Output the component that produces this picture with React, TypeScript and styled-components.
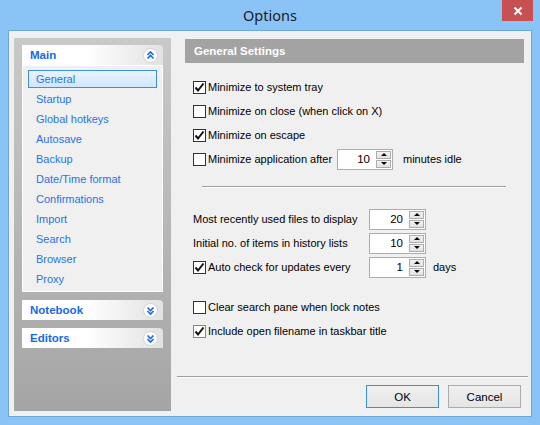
import React from 'react';
import styled, { createGlobalStyle } from 'styled-components';

const GlobalStyle = createGlobalStyle`
  html, body {
    margin: 0;
    padding: 0;
    background: #8ac4f7;
  }
  * {
    box-sizing: border-box;
  }
`;

//Window frame ----------------------------------
const Window = styled.div`
  width: 540px;
  height: 425px;
  display: flex;
  flex-direction: column;
  background-color: #8ac4f7;
  font-family: Tahoma, 'Liberation Sans', Arial, sans-serif;
  font-size: 11px;
  color: #000;
`;

const TitleBar = styled.div`
  height: 30px;
  display: grid;
  grid-template-columns: 1fr auto 1fr;
  align-items: start;
`;

const Title = styled.div`
  grid-column: 2;
  padding-top: 5px;
  font-family: 'Noto Sans', 'Open Sans', sans-serif;
  font-size: 14.5px;
  color: #1c1c1c;
`;

const CloseButton = styled.div`
  grid-column: 3;
  justify-self: end;
  width: 31px;
  height: 21px;
  margin-right: 7px;
  display: flex;
  justify-content: center;
  align-items: center;
  background-color: #c75050;
`;

const Client = styled.div`
  flex: 1;
  margin: 0 8px 8px 8px;
  display: flex;
  padding: 7px 3px 0 5px;
  background-color: #f0f0f0;
  border: 1px solid #6fa6da;
`;
//-----------------------------------------------

//Sidebar ---------------------------------------
const Sidebar = styled.div`
  width: 157px;
  margin-bottom: 5px;
  padding: 7px 8px 0 8px;
  display: flex;
  flex-direction: column;
  gap: 8px;
  background: linear-gradient(to bottom, #c9c9c9, #a5a5a5);
`;

const Section = styled.div`
  display: flex;
  flex-direction: column;
`;

const SectionHeader = styled.div`
  height: 20px;
  padding: 0 5px 0 8px;
  display: flex;
  justify-content: space-between;
  align-items: center;
  border-radius: 0 4px 0 0;
  background: linear-gradient(to right, #ffffff 0%, #ffffff 45%, #e2e2e2 100%);
  font-weight: bold;
  font-size: 11.5px;
  color: #1668e8;
`;

const ItemList = styled.div`
  padding: 4px 5px 1px 5px;
  display: flex;
  flex-direction: column;
  background-color: #f0f0f0;
  border: 1px solid #ffffff;
`;

const Item = styled.div<{ $selected?: boolean }>`
  height: 18px;
  margin-bottom: 2px;
  padding-left: 7px;
  display: flex;
  align-items: center;
  color: #2673ec;
  border: 1px solid ${p => (p.$selected ? '#3d8ee6' : 'transparent')};
  background: ${p => (p.$selected ? 'linear-gradient(to bottom, #eaf4ff, #cfe6fd)' : 'transparent')};
`;
//-----------------------------------------------

//Settings panel --------------------------------
const Panel = styled.div`
  flex: 1;
  display: flex;
  flex-direction: column;
`;

const PanelHeader = styled.div`
  height: 24px;
  margin: 1px 4px 0 14px;
  padding-left: 9px;
  display: flex;
  align-items: center;
  background-color: #a3a3a3;
  font-weight: bold;
  font-size: 11.5px;
  color: #ffffff;
`;

const Body = styled.div`
  flex: 1;
  padding: 14px 0 0 22px;
  display: flex;
  flex-direction: column;
`;

const Group = styled.div<{ $top: number }>`
  margin-top: ${p => p.$top}px;
  display: flex;
  flex-direction: column;
  gap: 4px;
`;

const Row = styled.div`
  height: 20px;
  display: flex;
  align-items: center;
`;

const Label = styled.span<{ $width?: number }>`
  width: ${p => (p.$width ? `${p.$width}px` : 'auto')};
  flex-shrink: 0;
  white-space: nowrap;
`;

const After = styled.span<{ $gap: number }>`
  margin-left: ${p => p.$gap}px;
`;

const Box = styled.span<{ $focus?: boolean }>`
  width: 13px;
  height: 13px;
  margin-right: 2px;
  flex-shrink: 0;
  display: flex;
  justify-content: center;
  align-items: center;
  background-color: #fff;
  border: 1px solid ${p => (p.$focus ? '#3399ff' : '#333333')};
`;

const Separator = styled.div`
  width: 304px;
  margin: 17px 0 0 9px;
  border-top: 1px solid #a0a0a0;
  border-bottom: 1px solid #ffffff;
`;

const Spin = styled.div<{ $width: number }>`
  width: ${p => p.$width}px;
  height: 21px;
  display: flex;
  background-color: #fff;
  border: 1px solid #abadb3;
`;

const SpinValue = styled.div`
  flex: 1;
  padding-right: 5px;
  display: flex;
  justify-content: flex-end;
  align-items: center;
  font-size: 11.5px;
`;

const SpinButtons = styled.div`
  width: 15px;
  margin: 1px;
  display: flex;
  flex-direction: column;
  gap: 1px;
`;

const SpinButton = styled.div`
  flex: 1;
  display: flex;
  justify-content: center;
  align-items: center;
  background: linear-gradient(to bottom, #f4f4f4, #e2e2e2);
  border: 1px solid #acacac;
`;

const Arrow = styled.span<{ $up?: boolean }>`
  width: 0;
  height: 0;
  border-left: 3px solid transparent;
  border-right: 3px solid transparent;
  ${p => (p.$up ? 'border-bottom: 3px solid #000;' : 'border-top: 3px solid #000;')}
`;

const Footer = styled.div`
  margin-left: 6px;
  border-top: 1px solid #a0a0a0;
`;

const Buttons = styled.div`
  padding: 7px 7px 8px 0;
  display: flex;
  justify-content: flex-end;
  gap: 9px;
  border-top: 1px solid #ffffff;
`;

const Button = styled.div<{ $default?: boolean }>`
  width: 73px;
  height: 23px;
  display: flex;
  justify-content: center;
  align-items: center;
  font-size: 11.5px;
  background: linear-gradient(to bottom, #f0f0f0, #e5e5e5);
  border: 1px solid ${p => (p.$default ? '#3c8fe0' : '#acacac')};
`;
//-----------------------------------------------

const Chevron = ({ up }: { up?: boolean }) => (
  <svg width="15" height="15" viewBox="0 0 15 15">
    <circle cx="7.5" cy="7.5" r="7" fill="#ffffff" stroke="#d2d2d2" />
    <g fill="none" stroke="#1668e8" strokeWidth="1.6" transform={up ? '' : 'rotate(180 7.5 7.5)'}>
      <polyline points="4.5,7 7.5,4 10.5,7" />
      <polyline points="4.5,10.5 7.5,7.5 10.5,10.5" />
    </g>
  </svg>
);

const Check = ({ checked, focus }: { checked?: boolean; focus?: boolean }) => (
  <Box $focus={focus}>
    {checked && (
      <svg width="11" height="11" viewBox="0 0 11 11">
        <polyline points="1.5,5.5 4,8.5 9.5,1.5" fill="none" stroke="#111" strokeWidth="2" />
      </svg>
    )}
  </Box>
);

const Spinner = ({ value, width }: { value: number; width: number }) => (
  <Spin $width={width}>
    <SpinValue>{value}</SpinValue>
    <SpinButtons>
      <SpinButton><Arrow $up /></SpinButton>
      <SpinButton><Arrow /></SpinButton>
    </SpinButtons>
  </Spin>
);

const items = [
  'General', 'Startup', 'Global hotkeys', 'Autosave', 'Backup', 'Date/Time format',
  'Confirmations', 'Import', 'Search', 'Browser', 'Proxy',
];

const App = (): JSX.Element => {
  return (
    <>
      <GlobalStyle />
      <Window>
        <TitleBar>
          <Title>Options</Title>
          <CloseButton>
            <svg width="10" height="10" viewBox="0 0 10 10">
              <path d="M1.5 1.5 L8.5 8.5 M8.5 1.5 L1.5 8.5" stroke="#fff" strokeWidth="2" />
            </svg>
          </CloseButton>
        </TitleBar>

        <Client>
          <Sidebar>
            <Section>
              <SectionHeader>Main<Chevron up /></SectionHeader>
              <ItemList>
                {items.map((item, i) => (
                  <Item key={item} $selected={i === 0}>{item}</Item>
                ))}
              </ItemList>
            </Section>
            <SectionHeader>Notebook<Chevron /></SectionHeader>
            <SectionHeader>Editors<Chevron /></SectionHeader>
          </Sidebar>

          <Panel>
            <PanelHeader>General Settings</PanelHeader>
            <Body>
              <Group $top={0}>
                <Row><Check checked /><Label>Minimize to system tray</Label></Row>
                <Row><Check /><Label>Minimize on close (when click on X)</Label></Row>
                <Row><Check checked /><Label>Minimize on escape</Label></Row>
                <Row>
                  <Check />
                  <Label $width={129}>Minimize application after</Label>
                  <Spinner value={10} width={56} />
                  <After $gap={10}>minutes idle</After>
                </Row>
              </Group>

              <Separator />

              <Group $top={21}>
                <Row>
                  <Label $width={176}>Most recently used files to display</Label>
                  <Spinner value={20} width={57} />
                </Row>
                <Row>
                  <Label $width={176}>Initial no. of items in history lists</Label>
                  <Spinner value={10} width={57} />
                </Row>
                <Row>
                  <Check checked />
                  <Label $width={161}>Auto check for updates every</Label>
                  <Spinner value={1} width={57} />
                  <After $gap={7}>days</After>
                </Row>
              </Group>

              <Group $top={20}>
                <Row><Check /><Label>Clear search pane when lock notes</Label></Row>
                <Row><Check checked focus /><Label>Include open filename in taskbar title</Label></Row>
              </Group>
            </Body>

            <Footer>
              <Buttons>
                <Button $default>OK</Button>
                <Button>Cancel</Button>
              </Buttons>
            </Footer>
          </Panel>
        </Client>
      </Window>
    </>
  );
};

export default App;
